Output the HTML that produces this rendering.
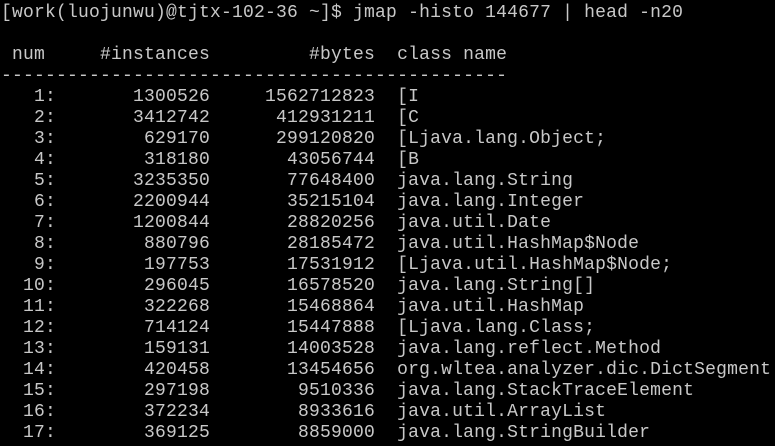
<!DOCTYPE html>
<html><head><meta charset="utf-8"><style>
html,body{margin:0;padding:0;background:#000;width:775px;height:446px;overflow:hidden}
pre{margin:0;padding:3px 0 0 1px;font-family:"Liberation Mono",monospace;font-size:18px;letter-spacing:0.2px;line-height:21px;color:#c8c8c8;white-space:pre}
</style></head><body><pre>[work(luojunwu)@tjtx-102-36 ~]$ jmap -histo 144677 | head -n20

 num     #instances         #bytes  class name
----------------------------------------------
   1:       1300526     1562712823  [I
   2:       3412742      412931211  [C
   3:        629170      299120820  [Ljava.lang.Object;
   4:        318180       43056744  [B
   5:       3235350       77648400  java.lang.String
   6:       2200944       35215104  java.lang.Integer
   7:       1200844       28820256  java.util.Date
   8:        880796       28185472  java.util.HashMap$Node
   9:        197753       17531912  [Ljava.util.HashMap$Node;
  10:        296045       16578520  java.lang.String[]
  11:        322268       15468864  java.util.HashMap
  12:        714124       15447888  [Ljava.lang.Class;
  13:        159131       14003528  java.lang.reflect.Method
  14:        420458       13454656  org.wltea.analyzer.dic.DictSegment
  15:        297198        9510336  java.lang.StackTraceElement
  16:        372234        8933616  java.util.ArrayList
  17:        369125        8859000  java.lang.StringBuilder
</pre></body></html>
